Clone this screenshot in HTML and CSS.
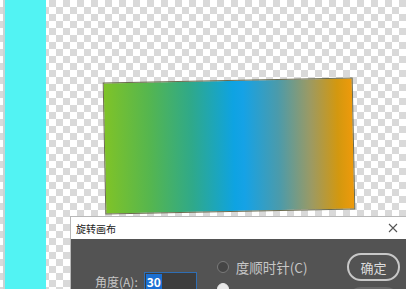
FILE: index.html
```html
<!DOCTYPE html>
<html lang="zh-CN">
<head>
    <meta charset="UTF-8">
    <meta name="viewport" content="width=device-width, initial-scale=1.0">
    <title>旋转画布</title>
    <link rel="stylesheet" href="styles.css">
</head>
<body>
    <div class="workspace">
        <div class="side-panel"></div>
        <div class="canvas-area">
            <div class="layer-rect"></div>
        </div>
    </div>

    <div class="dialog">
        <div class="dialog-title">
            <span>旋转画布</span>
            <svg class="close-icon" width="10" height="10" viewBox="0 0 10 10">
                <path d="M1 1 L9 9 M9 1 L1 9" stroke="#555" stroke-width="1.1" fill="none"/>
            </svg>
        </div>
        <div class="dialog-body">
            <div class="angle-group">
                <label for="angle">角度(A):</label>
                <div class="angle-input"><span class="selected">30</span></div>
            </div>
            <div class="radio-group">
                <div class="radio-row"><span class="radio"></span><span>度顺时针(C)</span></div>
                <div class="radio-row"><span class="radio checked"></span></div>
            </div>
            <div class="button-group">
                <div class="pill-button">确定</div>
                <div class="pill-button secondary"></div>
            </div>
        </div>
    </div>
</body>
</html>
```

FILE: styles.css
```css
html, body {
    margin: 0;
    padding: 0;
    width: 406px;
    height: 289px;
    overflow: hidden;
}
body {
    font-family: "Noto Sans CJK SC", "Liberation Sans", sans-serif;
    background-color: #ffffff;
    background-image:
        linear-gradient(45deg, #d9d9d9 25%, transparent 25%, transparent 75%, #d9d9d9 75%),
        linear-gradient(45deg, #d9d9d9 25%, transparent 25%, transparent 75%, #d9d9d9 75%);
    background-size: 14px 14px;
    background-position: 0 0, 7px 7px;
    position: relative;
}
.workspace {
    display: flex;
    height: 289px;
}
.side-panel {
    width: 41px;
    margin-left: 3px;
    border-left: 2px solid #c9d3d3;
    background-color: #52f3f3;
    flex-shrink: 0;
}
.canvas-area {
    flex: 1;
    padding: 80px 0 0 58px;
}
.layer-rect {
    width: 250px;
    height: 132px;
    box-sizing: border-box;
    border: 1px solid #6b6b4e;
    background: linear-gradient(to right, #7fc328 0%, #55b64f 18%, #2fa98a 35%, #0ea3e2 52%, #15a2e6 56%, #4b9bab 70%, #9c9a63 83%, #d3980f 94%, #ee9a0b 100%);
    transform: rotate(-1.15deg);
}

.dialog {
    position: absolute;
    left: 70px;
    top: 216px;
    width: 336px;
    border: 1px solid #b8b8b8;
    border-right: none;
    box-sizing: border-box;
}
.dialog-title {
    height: 22px;
    background-color: #ffffff;
    display: flex;
    align-items: center;
    justify-content: space-between;
    padding: 0 8px 0 5px;
    font-size: 10px;
    color: #222;
}
.dialog-body {
    height: 60px;
    background-color: #535353;
    display: flex;
    padding-left: 24px;
    color: #c6c6c6;
    overflow: hidden;
}
.angle-group {
    display: flex;
    align-items: center;
    gap: 6px;
    margin-top: 33px;
    height: 18px;
    font-size: 12px;
}
.angle-input {
    width: 53px;
    height: 18px;
    box-sizing: border-box;
    border: 1px solid #2f6eb4;
    background-color: #3d3d3d;
    padding-left: 1px;
    display: flex;
    align-items: center;
}
.selected {
    background-color: #1b6fd2;
    color: #ffffff;
    font-size: 12px;
    line-height: 15px;
    padding: 0 1px;
    font-weight: bold;
}
.radio-group {
    margin-left: 20px;
    padding-top: 18px;
    font-size: 13.5px;
}
.radio-row {
    display: flex;
    align-items: center;
    gap: 7px;
    height: 20px;
    margin-bottom: 2px;
}
.radio {
    width: 12px;
    height: 12px;
    border-radius: 50%;
    border: 1px solid #7a7a7a;
    background-color: #454545;
    box-sizing: border-box;
}
.radio.checked {
    background-color: #e8e8e8;
    border-color: #e8e8e8;
}
.button-group {
    margin-left: auto;
    padding-right: 6px;
    padding-top: 14px;
    display: flex;
    flex-direction: column;
    gap: 6px;
}
.pill-button {
    width: 53px;
    height: 28px;
    flex-shrink: 0;
    box-sizing: border-box;
    border: 2px solid #c8c8c8;
    border-radius: 14px;
    display: flex;
    align-items: center;
    justify-content: center;
    font-size: 13px;
    color: #dcdcdc;
}
.pill-button.secondary {
    border-color: #6a6a6a;
    background-color: #6a6a6a;
}
```
